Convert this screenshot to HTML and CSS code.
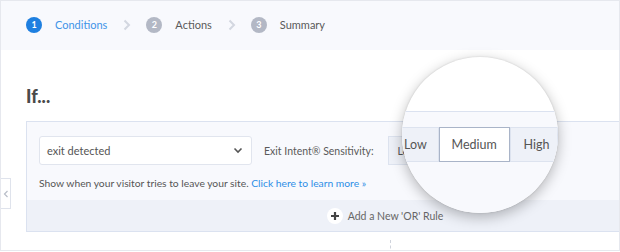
FILE: index.html
```html
<!DOCTYPE html>
<html lang="en">
<head>
  <meta charset="UTF-8">
  <title>Rules - Conditions</title>
  <link rel="stylesheet" href="styles.css">
</head>
<body>
  <div class="frame">
    <div class="steps">
      <div class="step active"><span class="step-num">1</span><span class="step-label">Conditions</span></div>
      <svg class="step-sep" width="8" height="12" viewBox="0 0 8 12"><path d="M1.5 1.5 L6 6 L1.5 10.5" fill="none" stroke="#d3d7e0" stroke-width="2"/></svg>
      <div class="step"><span class="step-num">2</span><span class="step-label">Actions</span></div>
      <svg class="step-sep" width="8" height="12" viewBox="0 0 8 12"><path d="M1.5 1.5 L6 6 L1.5 10.5" fill="none" stroke="#d3d7e0" stroke-width="2"/></svg>
      <div class="step"><span class="step-num">3</span><span class="step-label">Summary</span></div>
    </div>

    <div class="main">
      <div class="side-tab">
        <svg width="6" height="8" viewBox="0 0 6 8"><path d="M4.5 1 L1.5 4 L4.5 7" fill="none" stroke="#b8bdc8" stroke-width="1.2"/></svg>
      </div>

      <h2 class="if-title">If...</h2>

      <div class="rule-box">
        <div class="rule-body">
          <div class="rule-row">
            <div class="select">
              <span>exit detected</span>
              <svg width="10" height="7" viewBox="0 0 10 7"><path d="M1.5 1.5 L5 5 L8.5 1.5" fill="none" stroke="#555" stroke-width="1.6"/></svg>
            </div>
            <span class="field-label">Exit Intent® Sensitivity:</span>
            <div class="seg">
              <span class="seg-btn">Low</span>
              <span class="seg-btn">Medium</span>
              <span class="seg-btn">High</span>
            </div>
          </div>
          <p class="help">Show when your visitor tries to leave your site. <a href="#">Click here to learn more »</a></p>
        </div>
        <div class="rule-add">
          <span class="plus-icon">
            <svg width="10" height="10" viewBox="0 0 10 10"><path d="M5 1 V9 M1 5 H9" stroke="#444" stroke-width="2.2"/></svg>
          </span>
          <span>Add a New 'OR' Rule</span>
        </div>
      </div>
      <div class="connector"></div>

      <!-- zoomed-in lens over the sensitivity buttons -->
      <div class="lens">
        <div class="lens-box">
          <div class="lens-seg">
            <span class="lens-btn low">Low</span>
            <span class="lens-btn selected">Medium</span>
            <span class="lens-btn high">High</span>
          </div>
        </div>
      </div>
    </div>
  </div>
</body>
</html>
```

FILE: styles.css
```css
body {
  margin: 0;
  padding: 0;
  font-family: Lato, "Open Sans", sans-serif;
  color: #555;
  background-color: white;
}
.frame {
  width: 618px;
  height: 249px;
  border: 1px solid #e6e8ee;
  overflow: hidden;
  position: relative;
}
.steps {
  height: 49px;
  background-color: #f8f9fd;
  display: flex;
  align-items: center;
  padding-left: 25px;
  padding-bottom: 2px;
  box-sizing: border-box;
}
.step {
  display: flex;
  align-items: center;
}
.step-num {
  width: 16px;
  height: 16px;
  border-radius: 50%;
  background-color: #b3b8c5;
  color: white;
  font-size: 9px;
  font-weight: bold;
  display: flex;
  align-items: center;
  justify-content: center;
}
.step-label {
  margin-left: 13px;
  font-size: 11px;
  color: #5a5a5a;
}
.step.active .step-num {
  background-color: #1e7fe0;
}
.step.active .step-label {
  color: #3f94e8;
}
.step-sep {
  margin: 0 15px 0 16px;
}
.main {
  position: relative;
  height: 200px;
}
.side-tab {
  position: absolute;
  left: -1px;
  top: 128px;
  width: 9px;
  height: 29px;
  border: 1px solid #dfe3ec;
  background-color: white;
  display: flex;
  align-items: center;
  justify-content: center;
}
.if-title {
  margin: 0;
  padding: 36px 0 0 25px;
  font-size: 18px;
  font-weight: 900;
  color: #4a4a4a;
  line-height: 20px;
}
.rule-box {
  margin: 15px 0 0 25px;
  border: 1px solid #dbe2f0;
  border-right: none;
  background-color: #f8f9fd;
}
.rule-body {
  padding: 14px 12px 0 12px;
  height: 64px;
}
.rule-row {
  display: flex;
  align-items: center;
}
.select {
  width: 196px;
  height: 27px;
  border: 1px solid #e1e5ee;
  border-radius: 3px;
  background-color: white;
  display: flex;
  align-items: center;
  justify-content: space-between;
  padding: 0 8px 0 7px;
  font-size: 11px;
  color: #555;
}
.field-label {
  margin-left: 12px;
  font-size: 10.5px;
  color: #5a5a5a;
}
.seg {
  margin-left: 14px;
  display: flex;
}
.seg-btn {
  height: 27px;
  padding: 0 9px;
  border: 1px solid #dde3ef;
  background-color: #eef1f8;
  font-size: 10.5px;
  display: flex;
  align-items: center;
}
.help {
  margin: 12px 0 0 0;
  font-size: 10.3px;
  color: #555;
}
.help a {
  color: #2d8ee6;
  text-decoration: none;
}
.rule-add {
  height: 31px;
  background-color: #eef1f8;
  display: flex;
  align-items: center;
  justify-content: center;
  gap: 5px;
  font-size: 10.5px;
  color: #666;
  padding-left: 124px;
}
.plus-icon {
  width: 16px;
  height: 16px;
  border-radius: 50%;
  background-color: white;
  display: flex;
  align-items: center;
  justify-content: center;
}
.connector {
  margin: 8px 0 0 389px;
  height: 14px;
  border-left: 1px dashed #cfd3dc;
}
.lens {
  position: absolute;
  left: 401px;
  top: 7px;
  width: 156px;
  height: 156px;
  border-radius: 50%;
  overflow: hidden;
  background-color: white;
  box-shadow: 0 4px 14px rgba(0, 0, 0, 0.28), 0 0 2px rgba(0, 0, 0, 0.15);
}
.lens-box {
  margin-top: 54px;
  height: 120px;
  border-top: 1px solid #dbe2f0;
  background-color: #f8f9fd;
}
.lens-seg {
  margin: 15px 0 0 -12px;
  display: flex;
}
.lens-btn {
  border: 1px solid #dde3ef;
  background-color: #eef1f8;
  font-size: 12.5px;
  color: #555;
  display: flex;
  align-items: center;
  justify-content: center;
  box-sizing: border-box;
  height: 35px;
}
.lens-btn.low {
  width: 51px;
  padding-left: 2px;
}
.lens-btn.selected {
  width: 74px;
  background-color: white;
  border-color: #a9b4c8;
}
.lens-btn.high {
  width: 50px;
  justify-content: flex-start;
  padding-left: 13px;
}
```
